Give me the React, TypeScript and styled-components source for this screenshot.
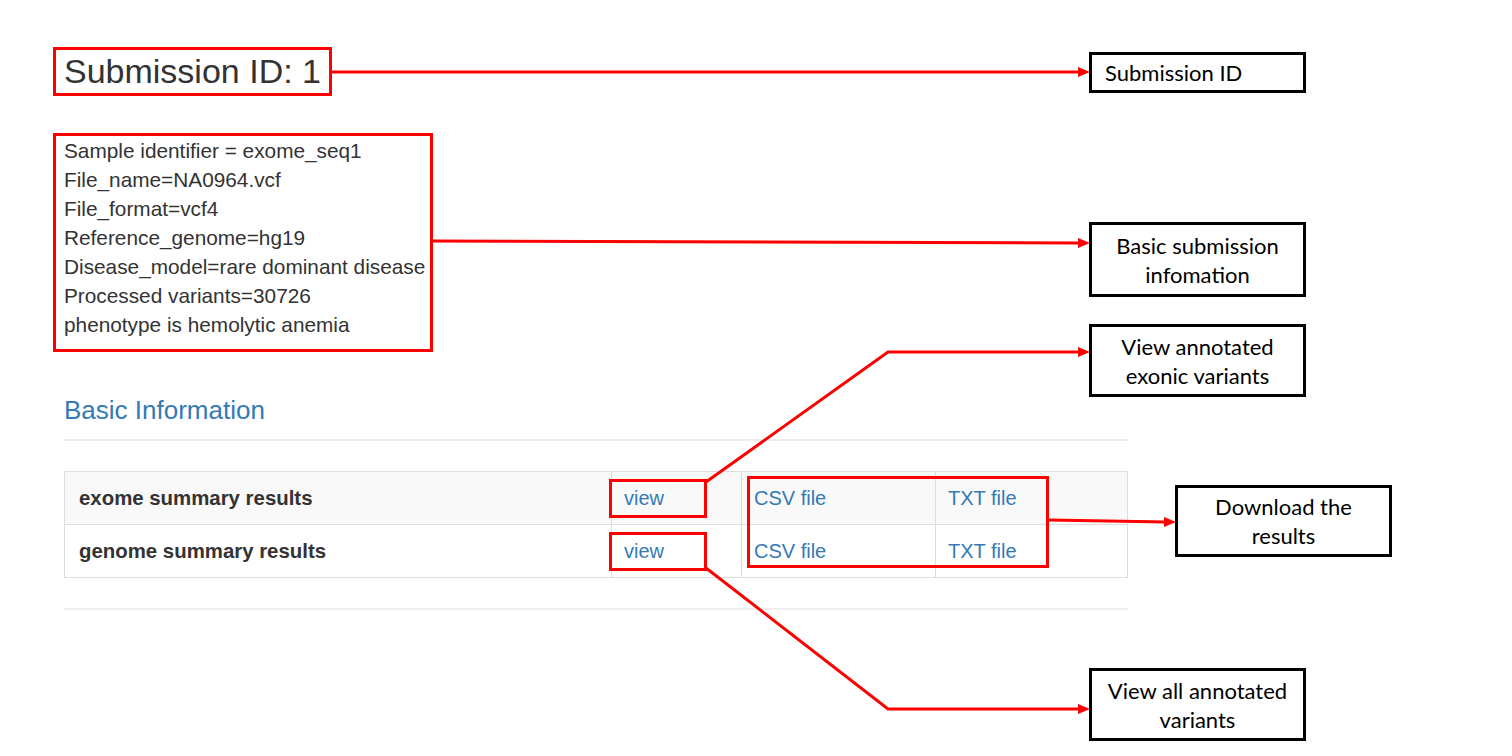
import React from "react";
import styled, { createGlobalStyle } from "styled-components";

const Global = createGlobalStyle`
  html, body { margin: 0; padding: 0; background: #fff; }
  body { font-family: "Liberation Sans", Arial, sans-serif; color: #333; }
  * { box-sizing: border-box; }
`;

const Page = styled.div`
  position: relative;
  width: 1512px;
  height: 756px;
  overflow: hidden;
  background: #fff;
`;

const Content = styled.main`
  display: flex;
  flex-direction: column;
  align-items: flex-start;
  width: 1128px;
  padding: 47px 0 0 64px;
`;

const RedFrame = styled.div<{ $pad: string; $mt?: number }>`
  border: 3px solid #ff0000;
  margin-left: -11px;
  margin-top: ${(p) => p.$mt ?? 0}px;
  padding: ${(p) => p.$pad};
`;

const Title = styled.h1`
  margin: 0;
  font-size: 34px;
  font-weight: 400;
  line-height: 43px;
  color: #333;
`;

const InfoLine = styled.div`
  font-size: 20.8px;
  line-height: 29px;
  white-space: nowrap;
`;

const SectionTitle = styled.h2`
  margin: 44px 0 0;
  font-size: 26px;
  font-weight: 400;
  line-height: 29px;
  color: #337ab7;
`;

const Rule = styled.hr<{ $mt: number }>`
  align-self: stretch;
  margin: ${(p) => p.$mt}px 0 0;
  border: 0;
  border-top: 2px solid #eee;
`;

const TableWrap = styled.div`
  position: relative;
  align-self: stretch;
  margin-top: 30px;
`;

const Table = styled.table`
  width: 100%;
  border-collapse: collapse;
  border: 1px solid #ddd;
  table-layout: fixed;
`;

const Row = styled.tr<{ $striped?: boolean }>`
  background: ${(p) => (p.$striped ? "#f9f9f9" : "#fff")};
  height: 53px;
`;

const Cell = styled.td<{ $bold?: boolean }>`
  border: 1px solid #ddd;
  padding: 0 12px 0 ${(p) => (p.$bold ? 14 : 12)}px;
  font-size: ${(p) => (p.$bold ? 20.4 : 20)}px;
  font-weight: ${(p) => (p.$bold ? 700 : 400)};
  color: #333;
  vertical-align: middle;
  white-space: nowrap;
`;

const Link = styled.a`
  color: #337ab7;
  text-decoration: none;
`;

const ViewFrame = styled.span`
  display: inline-block;
  margin-left: -15px;
  width: 98px;
  height: 39px;
  line-height: 33px;
  padding-left: 12px;
  border: 3px solid #ff0000;
`;

const DownloadFrame = styled.div`
  position: absolute;
  left: 683px;
  top: 5px;
  width: 302px;
  height: 92px;
  border: 3px solid #ff0000;
  pointer-events: none;
`;

const Callout = styled.div<{ $top: number; $left: number; $h: number; $leftAlign?: boolean }>`
  position: absolute;
  top: ${(p) => p.$top}px;
  left: ${(p) => p.$left}px;
  width: 217px;
  height: ${(p) => p.$h}px;
  border: 3px solid #000;
  background: #fff;
  display: flex;
  align-items: center;
  justify-content: ${(p) => (p.$leftAlign ? "flex-start" : "center")};
  padding: ${(p) => (p.$leftAlign ? "0 0 0 13px" : "0 12px")};
  text-align: center;
  font-family: Lato, "Open Sans", sans-serif;
  font-size: 22px;
  line-height: 29px;
  color: #000;
`;

const Overlay = styled.svg`
  position: absolute;
  inset: 0;
  pointer-events: none;
`;

const arrow = (x: number, y: number) => `${x},${y} ${x - 12},${y - 5} ${x - 12},${y + 5}`;

export default function App() {
  const info = [
    "Sample identifier = exome_seq1",
    "File_name=NA0964.vcf",
    "File_format=vcf4",
    "Reference_genome=hg19",
    "Disease_model=rare dominant disease",
    "Processed variants=30726",
    "phenotype is hemolytic anemia",
  ];
  const rows = [
    { label: "exome summary results", striped: true },
    { label: "genome summary results", striped: false },
  ];
  return (
    <Page>
      <Global />
      <Content>
        <RedFrame $pad="0 8px 0 8px">
          <Title>Submission ID: 1</Title>
        </RedFrame>
        <RedFrame $pad="0 5px 10px 8px" $mt={37}>
          {info.map((l) => (
            <InfoLine key={l}>{l}</InfoLine>
          ))}
        </RedFrame>
        <SectionTitle>Basic Information</SectionTitle>
        <Rule $mt={14} />
        <TableWrap>
          <Table>
            <colgroup>
              <col style={{ width: 547 }} />
              <col style={{ width: 130 }} />
              <col style={{ width: 194 }} />
              <col />
            </colgroup>
            <tbody>
              {rows.map((r) => (
                <Row key={r.label} $striped={r.striped}>
                  <Cell $bold>{r.label}</Cell>
                  <Cell>
                    <ViewFrame>
                      <Link href="#">view</Link>
                    </ViewFrame>
                  </Cell>
                  <Cell>
                    <Link href="#">CSV file</Link>
                  </Cell>
                  <Cell>
                    <Link href="#">TXT file</Link>
                  </Cell>
                </Row>
              ))}
            </tbody>
          </Table>
          <DownloadFrame />
        </TableWrap>
        <Rule $mt={30} />
      </Content>

      <Overlay width="1512" height="756" viewBox="0 0 1512 756">
        <g stroke="#ff0000" strokeWidth="3" fill="none">
          <line x1="332" y1="72" x2="1080" y2="72" />
          <line x1="433" y1="241" x2="1080" y2="243" />
          <polyline points="706,482 888,352 1080,352" />
          <line x1="1049" y1="520" x2="1166" y2="522" />
          <polyline points="706,568 888,709 1080,709" />
        </g>
        <g fill="#ff0000">
          <polygon points={arrow(1090, 72)} />
          <polygon points={arrow(1090, 243)} />
          <polygon points={arrow(1090, 352)} />
          <polygon points={arrow(1176, 522)} />
          <polygon points={arrow(1090, 709)} />
        </g>
      </Overlay>

      <Callout $top={52} $left={1089} $h={41} $leftAlign>
        Submission ID
      </Callout>
      <Callout $top={222} $left={1089} $h={75}>
        Basic submission infomation
      </Callout>
      <Callout $top={324} $left={1089} $h={73}>
        View annotated exonic variants
      </Callout>
      <Callout $top={485} $left={1175} $h={72}>
        Download the results
      </Callout>
      <Callout $top={668} $left={1089} $h={73}>
        View all annotated variants
      </Callout>
    </Page>
  );
}
